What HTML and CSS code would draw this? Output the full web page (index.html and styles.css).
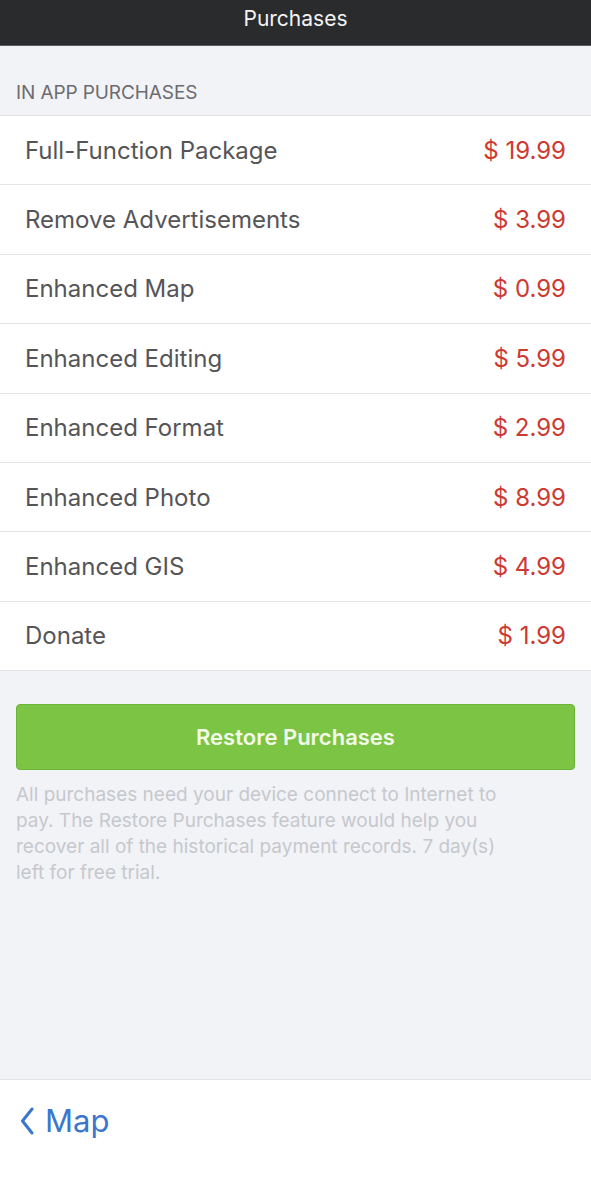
FILE: index.html
```html
<!DOCTYPE html>
<html>
<head>
<meta charset="utf-8">
<link rel="stylesheet" href="styles.css">
</head>
<body>
<div class="app">
  <header class="topbar"><span class="title">Purchases</span></header>
  <main class="content">
    <div class="section-title">IN APP PURCHASES</div>
    <ul class="list">
      <li class="row"><span class="name">Full-Function Package</span><span class="price">$ 19.99</span></li>
      <li class="row"><span class="name">Remove Advertisements</span><span class="price">$ 3.99</span></li>
      <li class="row"><span class="name">Enhanced Map</span><span class="price">$ 0.99</span></li>
      <li class="row"><span class="name">Enhanced Editing</span><span class="price">$ 5.99</span></li>
      <li class="row"><span class="name">Enhanced Format</span><span class="price">$ 2.99</span></li>
      <li class="row"><span class="name">Enhanced Photo</span><span class="price">$ 8.99</span></li>
      <li class="row"><span class="name">Enhanced GIS</span><span class="price">$ 4.99</span></li>
      <li class="row"><span class="name">Donate</span><span class="price">$ 1.99</span></li>
    </ul>
    <button class="restore">Restore Purchases</button>
    <p class="note">All purchases need your device connect to Internet to pay. The Restore Purchases feature would help you recover all of the historical payment records. 7 day(s) left for free trial.</p>
  </main>
  <footer class="bottombar">
    <a class="back">
      <svg class="chev" width="14" height="28" viewBox="0 0 14 28"><path d="M12 2 L2.5 14 L12 26" fill="none" stroke="currentColor" stroke-width="3" stroke-linecap="round" stroke-linejoin="round"/></svg>
      <span>Map</span>
    </a>
  </footer>
</div>
</body>
</html>
```

FILE: styles.css
```css
* { box-sizing: border-box; }
html, body { margin: 0; padding: 0; }
body {
  font-family: Inter, "Noto Sans", sans-serif;
  background: #f2f3f6;
  width: 591px;
  height: 1178px;
  overflow: hidden;
}
.app {
  display: flex;
  flex-direction: column;
  height: 1178px;
}
.topbar {
  height: 46px;
  background: #2a2b2d;
  border-bottom: 1.5px solid #5c5d60;
  display: flex;
  justify-content: center;
  align-items: flex-start;
  padding-top: 6px;
}
.title {
  color: #f4f4f4;
  font-size: 21px;
  line-height: 26px;
}
.content {
  flex: 1;
  display: flex;
  flex-direction: column;
}
.section-title {
  padding: 35px 16px 0 16px;
  height: 69px;
  font-size: 19px;
  line-height: 24px;
  color: #6c6c70;
  letter-spacing: -0.1px;
}
.list {
  list-style: none;
  margin: 0;
  padding: 0;
  background: #fff;
  border-top: 1px solid #e2e2e6;
}
.row {
  height: 69.4px;
  display: flex;
  justify-content: space-between;
  align-items: center;
  padding: 0 25px;
  border-bottom: 1px solid #e4e4e7;
  font-size: 24px;
}
.name { color: #555558; }
.price { color: #cc3a32; }
.restore {
  margin: 33px 16px 0 16px;
  height: 66px;
  background: #7cc444;
  border: 1px solid #6db33a;
  border-radius: 4px;
  color: #f3fae8;
  font-family: Inter, "Noto Sans", sans-serif;
  font-size: 22px;
  font-weight: 600;
}
.note {
  margin: 12px 80px 0 16px;
  font-size: 19px;
  line-height: 26px;
  color: #c6c8cd;
}
.bottombar {
  height: 99px;
  background: #fff;
  border-top: 1px solid #e3e4e7;
  display: flex;
  align-items: flex-start;
  padding: 22px 0 0 20px;
}
.back {
  display: flex;
  align-items: center;
  gap: 11px;
  color: #3a76cf;
  font-size: 31px;
}
.chev { display: block; }
```
